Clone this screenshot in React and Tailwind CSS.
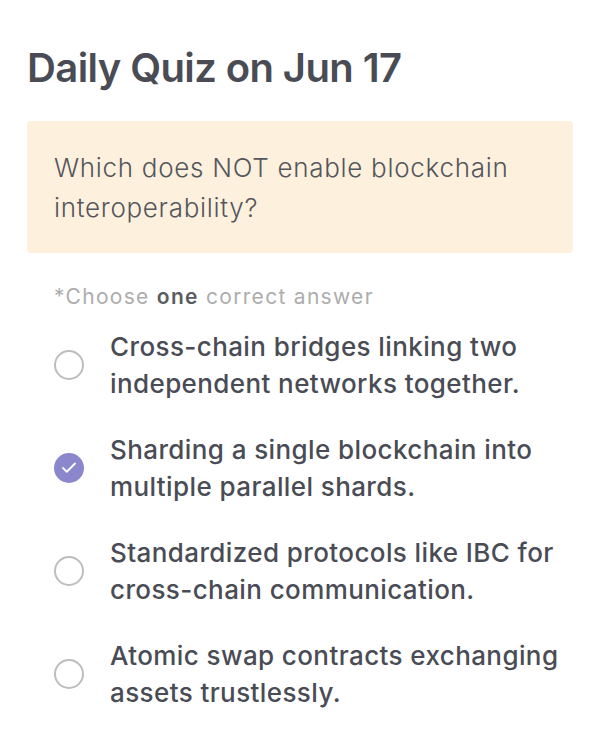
import { Check } from 'lucide-react'

const OPTIONS = [
  { id: 'a', text: 'Cross-chain bridges linking two independent networks together.' },
  { id: 'b', text: 'Sharding a single blockchain into multiple parallel shards.' },
  { id: 'c', text: 'Standardized protocols like IBC for cross-chain communication.' },
  { id: 'd', text: 'Atomic swap contracts exchanging assets trustlessly.' },
]

function Radio({ checked }) {
  if (checked) {
    return (
      <span className="flex h-[30px] w-[30px] shrink-0 items-center justify-center rounded-full bg-[#8a87cc]">
        <Check size={18} strokeWidth={2.4} className="text-white" />
      </span>
    )
  }
  return <span className="h-[30px] w-[30px] shrink-0 rounded-full border-2 border-[#bdbdbd]" />
}

export default function App() {
  const selected = 'b'

  return (
    <div className="min-h-[756px] bg-white px-[27px] pt-[42px] font-['Inter',sans-serif] text-[#4a4c55]">
      <h1 className="text-[40px] font-semibold leading-[52px] tracking-[-0.6px]">Daily Quiz on Jun 17</h1>

      <div className="mt-[27px] rounded-[4px] bg-[#fdf1de] px-[27px] pt-[27px] pb-[25px]">
        <p className="text-[26px] font-light leading-[40px] tracking-[0.7px] text-[#55565c]">
          Which does NOT enable blockchain interoperability?
        </p>
      </div>

      <p className="mt-[31px] px-[27px] text-[21px] leading-[26px] tracking-[1.3px] text-[#adadad]">
        *Choose <span className="font-semibold text-[#5a5b62]">one</span> correct answer
      </p>

      <div className="mt-[18px] flex flex-col gap-[29px] pl-[27px]">
        {OPTIONS.map((opt) => (
          <label key={opt.id} className="flex items-center gap-[26px]">
            <Radio checked={opt.id === selected} />
            <span className="text-[26px] font-medium leading-[37px] tracking-[0.4px]">{opt.text}</span>
          </label>
        ))}
      </div>
    </div>
  )
}
